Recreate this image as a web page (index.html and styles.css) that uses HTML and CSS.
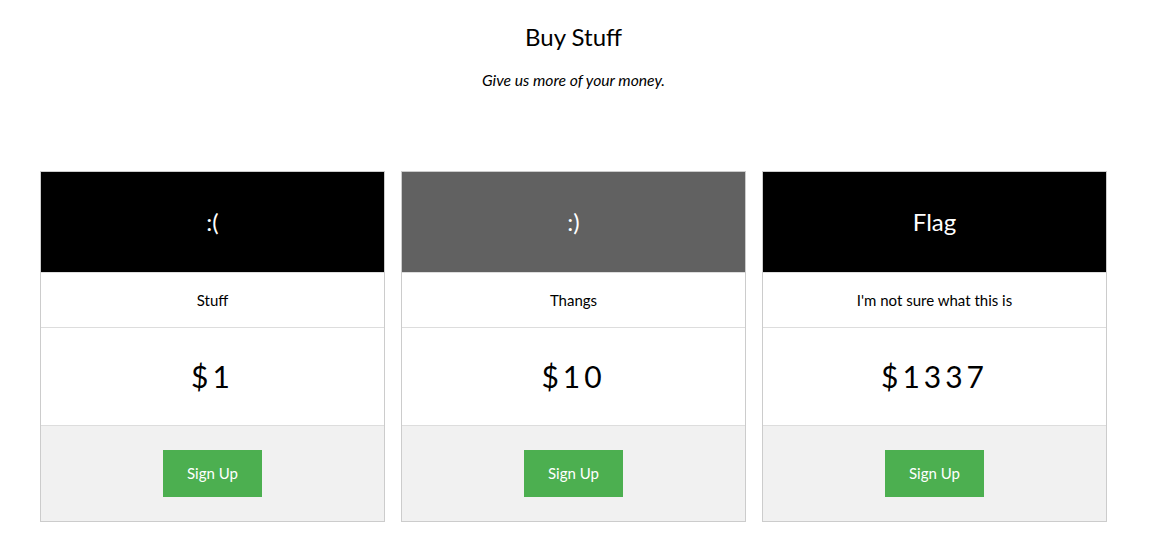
FILE: index.html
```html
<!DOCTYPE html>
<html>
<head>
<meta charset="utf-8">
<link rel="stylesheet" href="styles.css">
</head>
<body>
<div class="page">
  <header class="intro">
    <h1 class="title">Buy Stuff</h1>
    <p class="tagline">Give us more of your money.</p>
  </header>
  <div class="plans">
    <ul class="plan">
      <li class="plan-head dark">:(</li>
      <li class="plan-name">Stuff</li>
      <li class="plan-price"><h2>$1</h2></li>
      <li class="plan-foot"><button class="btn">Sign Up</button></li>
    </ul>
    <ul class="plan">
      <li class="plan-head grey">:)</li>
      <li class="plan-name">Thangs</li>
      <li class="plan-price"><h2>$10</h2></li>
      <li class="plan-foot"><button class="btn">Sign Up</button></li>
    </ul>
    <ul class="plan">
      <li class="plan-head dark">Flag</li>
      <li class="plan-name">I'm not sure what this is</li>
      <li class="plan-price"><h2>$1337</h2></li>
      <li class="plan-foot"><button class="btn">Sign Up</button></li>
    </ul>
  </div>
</div>
</body>
</html>
```
FILE: styles.css
```css
html, body {
  margin: 0;
  padding: 0;
  background: #fff;
}
body {
  font-family: Lato, "Open Sans", sans-serif;
  font-size: 15px;
  line-height: 1.5;
  color: #000;
}
.page {
  padding: 19px 47px 0 40px;
}
.intro {
  text-align: center;
}
.title {
  margin: 0;
  font-size: 24px;
  font-weight: 400;
  line-height: 36px;
}
.tagline {
  margin: 14px 0 0;
  font-style: italic;
  font-size: 15.7px;
  line-height: 22px;
}
.plans {
  margin-top: 80px;
  display: grid;
  grid-template-columns: repeat(3, 1fr);
  gap: 16px;
}
.plan {
  list-style: none;
  margin: 0;
  padding: 0;
  border: 1px solid #ccc;
  text-align: center;
}
.plan li {
  border-bottom: 1px solid #ddd;
}
.plan li:last-child {
  border-bottom: none;
}
.plan-head {
  padding: 32px 16px;
  font-size: 24px;
  line-height: 36px;
  color: #fff;
}
.dark {
  background: #000;
}
.grey {
  background: #616161;
}
.plan-name {
  padding: 16px;
  line-height: 22px;
}
.plan-price {
  padding: 16px;
}
.plan-price h2 {
  margin: 10px 0;
  font-size: 30px;
  font-weight: 400;
  line-height: 45px;
  letter-spacing: 4px;
}
.plan-foot {
  padding: 24px 16px;
  background: #f1f1f1;
}
.btn {
  border: none;
  margin: 0;
  background: #4caf50;
  color: #fff;
  font-family: inherit;
  font-size: 15px;
  line-height: 22.5px;
  padding: 12px 24px;
  cursor: pointer;
  vertical-align: middle;
}
```
